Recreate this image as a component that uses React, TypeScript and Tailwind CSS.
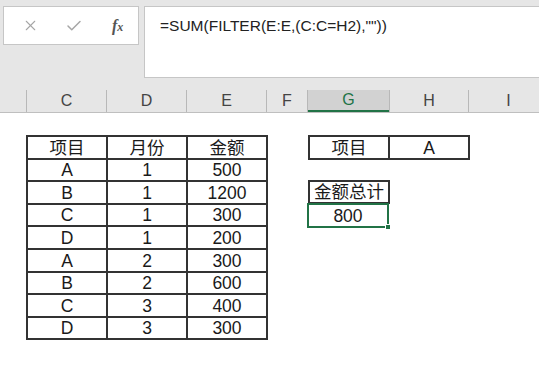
import { X, Check } from "lucide-react";

const cols = [
  { w: 27, label: "" },
  { w: 80, label: "C" },
  { w: 80, label: "D" },
  { w: 80, label: "E" },
  { w: 41, label: "F" },
  { w: 82, label: "G", active: true },
  { w: 79, label: "H" },
  { w: 80, label: "I" },
];

const rows = [
  ["A", "1", "500"],
  ["B", "1", "1200"],
  ["C", "1", "300"],
  ["D", "1", "200"],
  ["A", "2", "300"],
  ["B", "2", "600"],
  ["C", "3", "400"],
  ["D", "3", "300"],
];

const cell =
  "border-2 border-[#333] w-[80px] h-[22.6px] p-0 text-center align-bottom leading-[20px] whitespace-nowrap";

export default function App() {
  return (
    <div
      className="w-[539px] h-[365px] overflow-hidden bg-white text-[#1a1a1a]"
      style={{ fontFamily: '"Liberation Sans", "Noto Sans CJK SC", sans-serif' }}
    >
      {/* formula bar */}
      <div className="h-[91px] bg-[#e6e6e6] flex items-start gap-[5px] pl-[3px] pt-[6px]">
        <div className="w-[136px] h-[39px] bg-white border border-[#c6c6c6] flex items-center">
          <X className="w-[17px] h-[17px] text-[#a6a6a6] ml-[18px]" strokeWidth={1.5} />
          <Check className="w-[18px] h-[18px] text-[#a6a6a6] ml-[26px]" strokeWidth={2} />
          <span
            className="ml-[29px] text-[16px] italic font-bold text-[#555]"
            style={{ fontFamily: '"Liberation Serif", serif' }}
          >
            f<span className="text-[12px]">x</span>
          </span>
        </div>
        <div className="flex-1 h-[72px] bg-white border border-r-0 border-[#c6c6c6] pl-[15px] pt-[7px] text-[15.5px] text-[#222]">
          =SUM(FILTER(E:E,(C:C=H2),""))
        </div>
      </div>

      {/* column headers */}
      <div className="h-[22px] flex bg-[#e6e6e6] border-b border-[#bfbfbf]">
        {cols.map((c, i) => (
          <div key={i} className="flex items-end shrink-0">
            <div
              className={
                c.active
                  ? "h-[22px] flex items-center justify-center bg-[#d2d2d2] border-b-2 border-[#217346] text-[#217346] text-[16px]"
                  : "h-[22px] flex items-center justify-center text-[#444] text-[16px]"
              }
              style={{ width: c.w - 1 }}
            >
              {c.label}
            </div>
            <div className="w-px h-[22px] bg-[#b8b8b8]" />
          </div>
        ))}
      </div>

      {/* sheet */}
      <div className="flex items-start text-[17.5px]">
        <div className="w-[26px] shrink-0" />
        <table className="border-collapse mt-[22px] shrink-0">
          <tbody>
            <tr>
              <td className={cell}>项目</td>
              <td className={cell}>月份</td>
              <td className={cell}>金额</td>
            </tr>
            {rows.map((r, i) => (
              <tr key={i}>
                {r.map((v, j) => (
                  <td key={j} className={cell}>
                    {v}
                  </td>
                ))}
              </tr>
            ))}
          </tbody>
        </table>
        <div className="w-[40px] shrink-0" />
        <div className="flex flex-col items-start mt-[22px]">
          <table className="border-collapse">
            <tbody>
              <tr>
                <td className={cell}>项目</td>
                <td className={cell}>A</td>
              </tr>
            </tbody>
          </table>
          <table className="border-collapse mt-[20px]">
            <tbody>
              <tr>
                <td className={cell}>金额总计</td>
              </tr>
            </tbody>
          </table>
          <div className="relative w-[82px] h-[25px] -ml-[1px] -mt-[1px] border-2 border-[#217346] flex items-end justify-center leading-[20px]">
            800
            <div className="absolute -right-[4px] -bottom-[4px] w-[6px] h-[6px] bg-[#217346] border border-white" />
          </div>
        </div>
      </div>
    </div>
  );
}
